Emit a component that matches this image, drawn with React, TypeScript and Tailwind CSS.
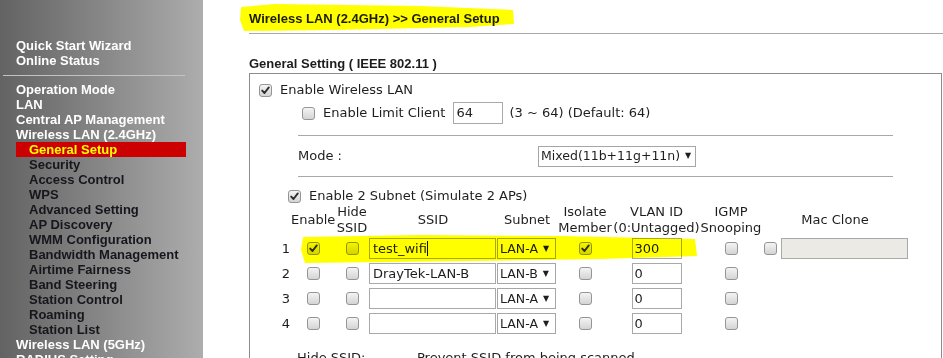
import React from "react";

const Check = ({ checked = false }: { checked?: boolean }) => (
  <span className="inline-flex w-[13px] h-[13px] shrink-0 items-center justify-center rounded-[3px] border border-[#959595] bg-linear-to-b from-[#f4f4f4] to-[#d4d4d4]">
    {checked && (
      <svg width="9" height="9" viewBox="0 0 9 9">
        <path d="M1.2 4.6 L3.5 7 L7.8 1.4" fill="none" stroke="#2e2e2e" strokeWidth="1.9" strokeLinecap="round" strokeLinejoin="round" />
      </svg>
    )}
  </span>
);

const Select = ({ label, w }: { label: string; w: string }) => (
  <div className={`flex h-[21px] items-center overflow-hidden border border-[#a6a6a6] bg-white pl-[2px] text-[12.5px] ${w}`}>
    <span className="whitespace-nowrap">{label}</span>
    <span className="ml-[5px] text-[8px] leading-none">▼</span>
  </div>
);

const top = "pl-[16px] text-white";
const sub = "pl-[29px] text-[#16161c]";

export default function App() {
  const rows = [
    { n: 1, en: true, ssid: "test_wifi", subnet: "LAN-A", iso: true, vlan: "300", mac: true },
    { n: 2, en: false, ssid: "DrayTek-LAN-B", subnet: "LAN-B", iso: false, vlan: "0", mac: false },
    { n: 3, en: false, ssid: "", subnet: "LAN-A", iso: false, vlan: "0", mac: false },
    { n: 4, en: false, ssid: "", subnet: "LAN-A", iso: false, vlan: "0", mac: false },
  ];
  const cols = "grid grid-cols-[11px_44px_34px_128px_60px_56px_87px_62px_146px]";
  return (
    <div className="relative flex h-[358px] w-[943px] overflow-hidden bg-white">
      {/* Sidebar */}
      <div className="w-[203px] shrink-0 bg-linear-to-r from-[#636363] to-[#adadad] pt-[38px] font-['Liberation_Sans',Arial,sans-serif] text-[13px] font-bold leading-[15px]">
        <div className={top}>Quick Start Wizard</div>
        <div className={top}>Online Status</div>
        <div className="mb-[6px] ml-[3px] mt-[7px] h-px w-[182px] bg-[#c2c2c2]" />
        <div className={top}>Operation Mode</div>
        <div className={top}>LAN</div>
        <div className={top}>Central AP Management</div>
        <div className={top}>Wireless LAN (2.4GHz)</div>
        <div className="ml-[16px] w-[170px] bg-[#cc0000] pl-[13px] text-[#ffff00]">General Setup</div>
        <div className={sub}>Security</div>
        <div className={sub}>Access Control</div>
        <div className={sub}>WPS</div>
        <div className={sub}>Advanced Setting</div>
        <div className={sub}>AP Discovery</div>
        <div className={sub}>WMM Configuration</div>
        <div className={sub}>Bandwidth Management</div>
        <div className={sub}>Airtime Fairness</div>
        <div className={sub}>Band Steering</div>
        <div className={sub}>Station Control</div>
        <div className={sub}>Roaming</div>
        <div className={sub}>Station List</div>
        <div className={top}>Wireless LAN (5GHz)</div>
        <div className={top}>RADIUS Setting</div>
      </div>

      {/* Main */}
      <div className="flex-1 pl-[46px] text-[#1c1c1c]">
        <div className="h-[34px] border-b border-[#a8a8a8] pt-[11px] font-['Liberation_Sans',Arial,sans-serif] text-[13px] font-bold leading-[15px]">
          Wireless LAN (2.4GHz) &gt;&gt; General Setup
        </div>
        <div className="mt-[22px] font-['Liberation_Sans',Arial,sans-serif] text-[13px] font-bold leading-[15px]">
          General Setting ( IEEE 802.11 )
        </div>
        <div className="mr-[1px] mt-[2px] h-[400px] border border-[#8c8c8c] font-['DejaVu_Sans',Verdana,sans-serif] text-[13px] leading-[16px] text-[#1e1e1e]">
          <div className="flex items-center gap-[8px] pl-[9px] pt-[8px]">
            <Check checked />
            <span>Enable Wireless LAN</span>
          </div>
          <div className="mt-[4px] flex h-[22px] items-center pl-[52px]">
            <Check />
            <span className="ml-[8px]">Enable Limit Client</span>
            <div className="ml-[8px] flex h-[22px] w-[50px] items-center border border-[#a9a9a9] pl-[2px]">64</div>
            <span className="ml-[6px]">(3 ~ 64) (Default: 64)</span>
          </div>
          <div className="ml-[48px] mt-[11px] h-px w-[595px] bg-[#a8a8a8]" />
          <div className="flex h-[40px] items-center pl-[48px]">
            <span className="w-[240px]">Mode :</span>
            <Select label="Mixed(11b+11g+11n)" w="w-[158px] h-[19px]" />
          </div>
          <div className="ml-[48px] h-px w-[595px] bg-[#a8a8a8]" />
          <div className="mt-[11px] flex items-center gap-[8px] pl-[38px]">
            <Check checked />
            <span>Enable 2 Subnet (Simulate 2 APs)</span>
          </div>
          <div className="pl-[30px]">
            <div className={`${cols} h-[32px] items-center text-center whitespace-nowrap`}>
              <span />
              <span>Enable</span>
              <span>Hide<br />SSID</span>
              <span>SSID</span>
              <span>Subnet</span>
              <span className="flex flex-col items-center">
                <span>Isolate</span>
                <span>Member</span>
              </span>
              <span className="flex flex-col items-center">
                <span>VLAN ID</span>
                <span>(0:Untagged)</span>
              </span>
              <span className="flex flex-col items-center">
                <span>IGMP</span>
                <span>Snooping</span>
              </span>
              <span>Mac Clone</span>
            </div>
            {rows.map((r) => (
              <div key={r.n} className={`${cols} h-[25px] items-center`}>
                <span className="pr-[1px] text-right">{r.n}</span>
                <span className="flex justify-center"><Check checked={r.en} /></span>
                <span className="flex justify-center"><Check /></span>
                <span className="flex">
                  <div className="flex h-[21px] w-[127px] items-center border border-[#a9a9a9] pl-[3px]">
                    {r.ssid}
                    {r.n === 1 && <span className="h-[15px] w-px bg-[#111]" />}
                  </div>
                </span>
                <span className="flex">
                  <Select label={r.subnet} w="w-[59px]" />
                </span>
                <span className="flex justify-center"><Check checked={r.iso} /></span>
                <span className="flex justify-center">
                  <div className="flex h-[21px] w-[50px] items-center border border-[#a9a9a9] pl-[2px]">{r.vlan}</div>
                </span>
                <span className="flex justify-center"><Check /></span>
                <span className="flex items-center gap-[4px] pl-[2px]">
                  {r.mac && (
                    <>
                      <Check />
                      <div className="h-[21px] w-[127px] border border-[#a9a9a9] bg-[#ebeae4]" />
                    </>
                  )}
                </span>
              </div>
            ))}
          </div>
          <div className="mt-[14px] flex pl-[47px]">
            <span className="w-[120px]">Hide SSID:</span>
            <span>Prevent SSID from being scanned.</span>
          </div>
        </div>
      </div>

      {/* Marker highlights */}
      <svg className="pointer-events-none absolute left-0 top-0 mix-blend-multiply" width="943" height="358">
        <path d="M241 7 L275 4 L420 6 L513 10 L514 24 L470 27 L330 30 L244 31 L240 20 Z" fill="#ffff00" />
        <path d="M303 237 L420 235 L560 236 L695 239 L697 256 L600 259 L470 261 L305 263 L301 250 Z" fill="#ffff00" />
      </svg>
    </div>
  );
}
